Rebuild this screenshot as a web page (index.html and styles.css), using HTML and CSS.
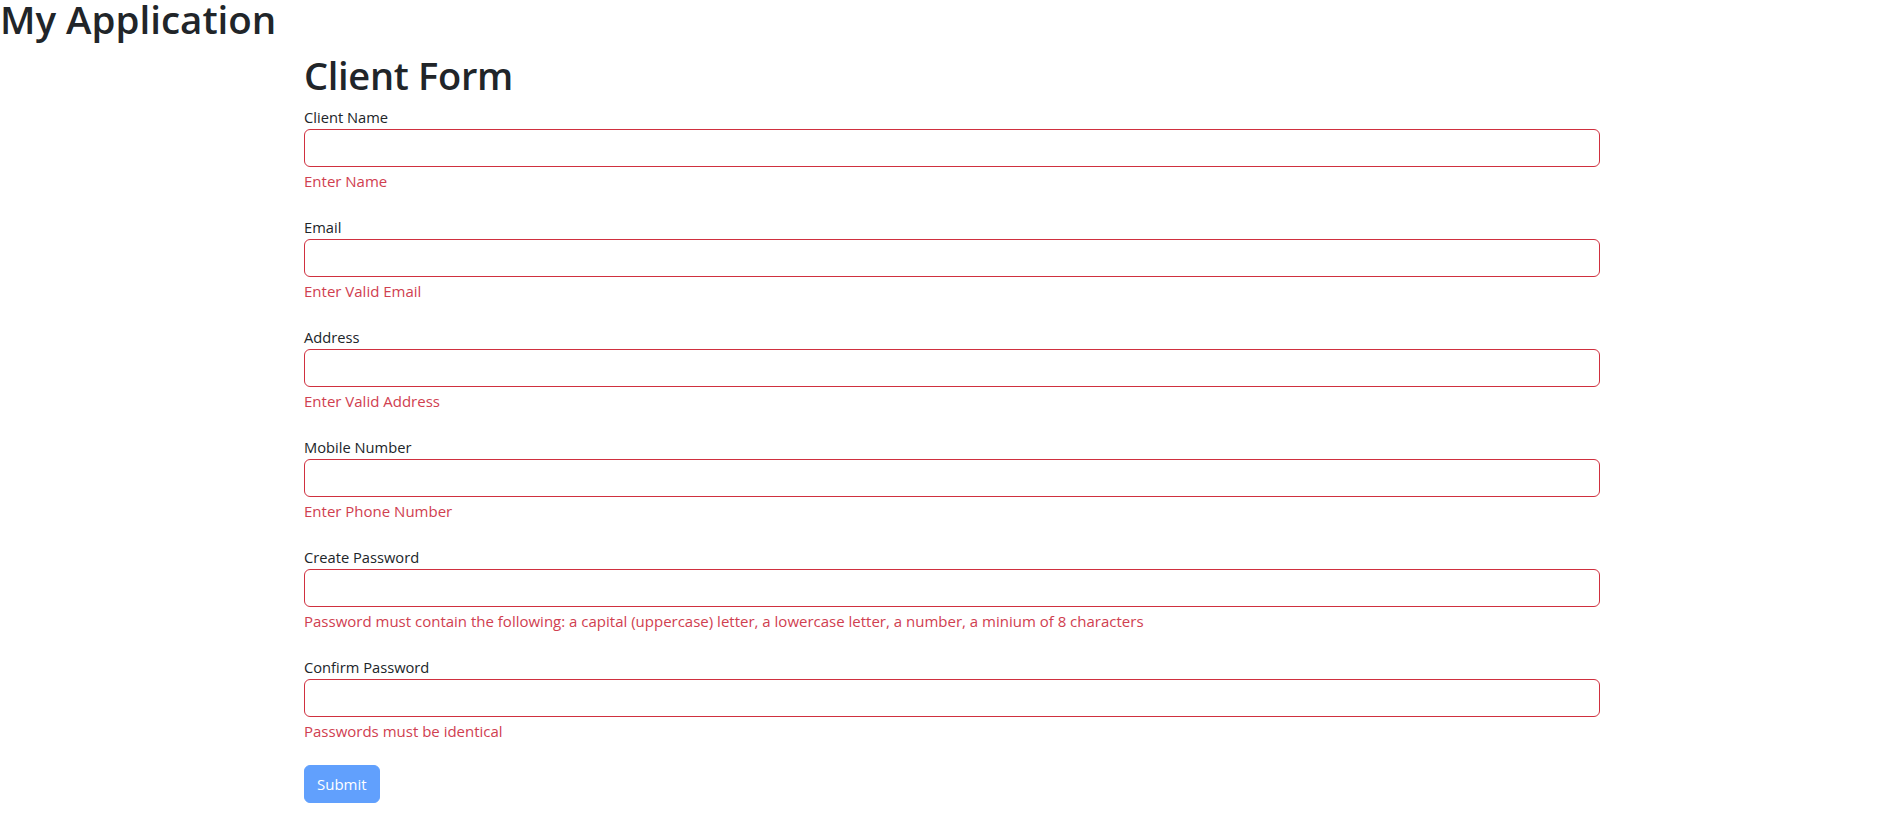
FILE: index.html
```html
<!DOCTYPE html>
<html lang="en">
<head>
<meta charset="utf-8">
<title>My Application</title>
<link rel="stylesheet" href="styles.css">
</head>
<body>
<h1 class="app-title">My Application</h1>
<main class="container">
  <h1 class="form-title">Client Form</h1>
  <form class="client-form">
    <div class="field">
      <label class="field-label" for="name">Client Name</label>
      <input class="control" id="name" type="text">
      <div class="feedback">Enter Name</div>
    </div>
    <div class="field">
      <label class="field-label" for="email">Email</label>
      <input class="control" id="email" type="email">
      <div class="feedback">Enter Valid Email</div>
    </div>
    <div class="field">
      <label class="field-label" for="address">Address</label>
      <input class="control" id="address" type="text">
      <div class="feedback">Enter Valid Address</div>
    </div>
    <div class="field">
      <label class="field-label" for="mobile">Mobile Number</label>
      <input class="control" id="mobile" type="text">
      <div class="feedback">Enter Phone Number</div>
    </div>
    <div class="field">
      <label class="field-label" for="pw">Create Password</label>
      <input class="control" id="pw" type="password">
      <div class="feedback">Password must contain the following: a capital (uppercase) letter, a lowercase letter, a number, a minium of 8 characters</div>
    </div>
    <div class="field">
      <label class="field-label" for="pw2">Confirm Password</label>
      <input class="control" id="pw2" type="password">
      <div class="feedback">Passwords must be identical</div>
    </div>
    <button class="btn-submit" type="submit" disabled>Submit</button>
  </form>
</main>
</body>
</html>
```

FILE: styles.css
```css
* {
  box-sizing: border-box;
}

body {
  margin: 0;
  font-family: "Open Sans", "Noto Sans", "Liberation Sans", sans-serif;
  font-size: 16px;
  line-height: 24px;
  color: #212529;
  background: #ffffff;
}

.app-title {
  margin: 0;
  font-size: 38.5px;
  line-height: 38px;
  font-weight: 600;
  letter-spacing: 0;
}

.container {
  width: 1296px;
  margin-left: 304px;
}

.form-title {
  margin: 14px 0 7px;
  font-size: 38px;
  line-height: 46px;
  font-weight: 600;
  letter-spacing: -0.3px;
}

.client-form {
  display: flex;
  flex-direction: column;
  align-items: flex-start;
}

.field {
  width: 100%;
  margin-bottom: 23px;
}

.field-label {
  display: block;
  font-size: 14.7px;
  line-height: 24px;
}

.control {
  display: block;
  width: 100%;
  height: 38px;
  padding: 6px 12px;
  font: inherit;
  color: #212529;
  background: #fff;
  border: 1px solid #d0303f;
  border-radius: 6px;
  outline: none;
}

.feedback {
  margin-top: 4px;
  font-size: 15px;
  line-height: 21px;
  color: #d04050;
}

.btn-submit {
  height: 38px;
  padding: 6px 12px;
  font: inherit;
  font-size: 15px;
  line-height: 24px;
  color: #fff;
  background: #0d6efd;
  border: 1px solid #0d6efd;
  border-radius: 6px;
  opacity: 0.65;
}
```
